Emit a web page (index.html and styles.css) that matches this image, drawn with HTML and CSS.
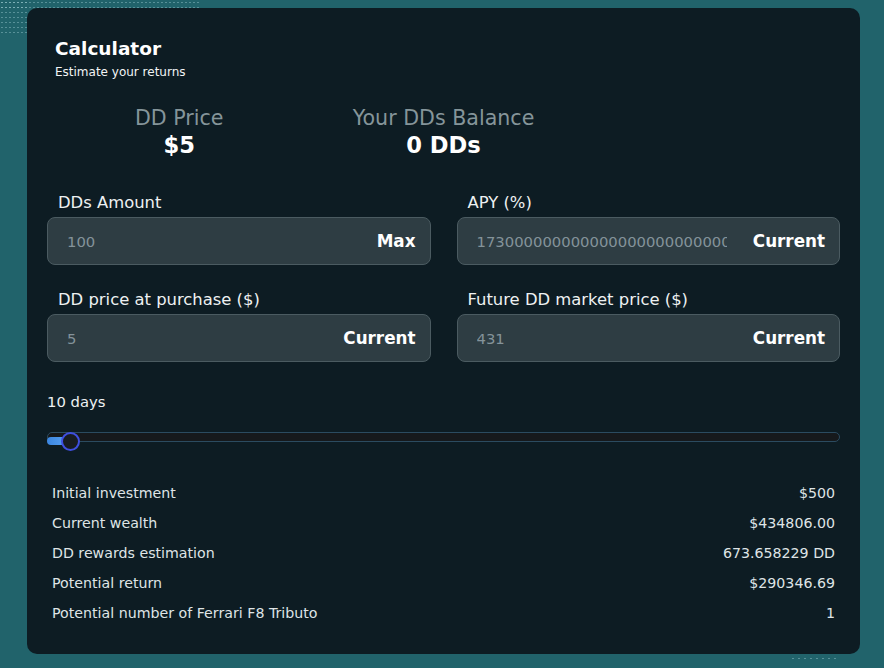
FILE: index.html
```html
<!DOCTYPE html>
<html lang="en">
<head>
    <meta charset="UTF-8">
    <meta name="viewport" content="width=device-width, initial-scale=1.0">
    <title>Calculator</title>
    <link rel="stylesheet" href="styles.css">
</head>
<body>
    <div class="dots dots-top"></div>
    <div class="dots dots-left"></div>
    <div class="dots dots-right"></div>
    <div class="card">
        <h1 class="title">Calculator</h1>
        <p class="subtitle">Estimate your returns</p>

        <div class="stats">
            <div class="stat">
                <span class="stat-label">DD Price</span>
                <strong class="stat-value">$5</strong>
            </div>
            <div class="stat">
                <span class="stat-label">Your DDs Balance</span>
                <strong class="stat-value">0 DDs</strong>
            </div>
        </div>

        <div class="fields">
            <div class="field">
                <label>DDs Amount</label>
                <div class="input-wrap">
                    <input type="text" value="100">
                    <span class="input-btn">Max</span>
                </div>
            </div>
            <div class="field">
                <label>APY (%)</label>
                <div class="input-wrap">
                    <input type="text" value="17300000000000000000000000000">
                    <span class="input-btn">Current</span>
                </div>
            </div>
            <div class="field">
                <label>DD price at purchase ($)</label>
                <div class="input-wrap">
                    <input type="text" value="5">
                    <span class="input-btn">Current</span>
                </div>
            </div>
            <div class="field">
                <label>Future DD market price ($)</label>
                <div class="input-wrap">
                    <input type="text" value="431">
                    <span class="input-btn">Current</span>
                </div>
            </div>
        </div>

        <div class="days">10 days</div>
        <div class="slider">
            <div class="track"></div>
            <div class="fill"></div>
            <div class="thumb"></div>
        </div>

        <div class="results">
            <div class="row"><span>Initial investment</span><span>$500</span></div>
            <div class="row"><span>Current wealth</span><span>$434806.00</span></div>
            <div class="row"><span>DD rewards estimation</span><span>673.658229 DD</span></div>
            <div class="row"><span>Potential return</span><span>$290346.69</span></div>
            <div class="row"><span>Potential number of Ferrari F8 Tributo</span><span>1</span></div>
        </div>
    </div>
</body>
</html>
```
FILE: styles.css
```css
body {
    margin: 0;
    height: 668px;
    overflow: hidden;
    background-color: #21636b;
    font-family: "DejaVu Sans", "Noto Sans", sans-serif;
    color: #e6ebed;
    position: relative;
}
.dots {
    position: absolute;
    background-image: radial-gradient(circle, rgba(190, 230, 235, 0.35) 0.7px, transparent 1px);
    background-size: 4px 5px;
}
.dots-top {
    left: 0;
    top: 0;
    width: 200px;
    height: 12px;
}
.dots-left {
    left: 0;
    top: 0;
    width: 27px;
    height: 34px;
}
.dots-right {
    left: 790px;
    top: 585px;
    width: 50px;
    height: 74px;
    background-size: 6px 7px;
}
.card {
    position: relative;
    box-sizing: border-box;
    width: 833px;
    height: 646px;
    margin: 8px 0 0 27px;
    padding: 29px 20px 26px;
    background-color: #0d1c23;
    border-radius: 10px;
}
.title {
    margin: 0 0 0 8px;
    font-size: 18.5px;
    line-height: 24px;
    font-weight: bold;
    color: #fff;
}
.subtitle {
    margin: 3px 0 0 8px;
    font-size: 12px;
    line-height: 16px;
    color: #f2f4f5;
}
.stats {
    display: grid;
    grid-template-columns: repeat(3, 1fr);
    margin-top: 26px;
}
.stat {
    display: flex;
    flex-direction: column;
    align-items: center;
}
.stat-label {
    font-size: 20.6px;
    line-height: 24px;
    color: #85959a;
}
.stat-value {
    font-size: 22.6px;
    line-height: 30px;
    color: #fff;
}
.fields {
    display: grid;
    grid-template-columns: 1fr 1fr;
    column-gap: 26px;
    row-gap: 24px;
    margin-top: 32px;
}
.field label {
    display: block;
    padding: 1px 0 0 11px;
    margin-bottom: 4px;
    font-size: 16.4px;
    line-height: 20px;
    color: #eef1f2;
}
.input-wrap {
    display: flex;
    align-items: center;
    box-sizing: border-box;
    height: 48px;
    padding: 0 14px 0 19px;
    background-color: #2e3d43;
    border: 1.5px solid #4b5b61;
    border-radius: 8px;
}
.input-wrap input {
    flex: 1;
    min-width: 0;
    padding: 0;
    border: none;
    outline: none;
    background: transparent;
    font-family: inherit;
    font-size: 14.8px;
    color: #84939a;
}
.input-btn {
    margin-left: 26px;
    font-size: 16.8px;
    font-weight: bold;
    color: #fff;
}
.days {
    margin-top: 30px;
    font-size: 14.8px;
    line-height: 20px;
    color: #eef1f2;
}
.slider {
    position: relative;
    height: 18px;
    margin-top: 20px;
}
.track {
    box-sizing: border-box;
    height: 10px;
    margin-top: 4px;
    background-color: #16191c;
    border: 1px solid #2b4b60;
    border-radius: 5px;
}
.fill {
    position: absolute;
    left: 0;
    top: 5px;
    width: 24px;
    height: 8px;
    border-radius: 4px 0 0 4px;
    background: linear-gradient(90deg, #3b86e0, #5ca6f5);
}
.thumb {
    position: absolute;
    left: 14px;
    top: 0;
    box-sizing: border-box;
    width: 19px;
    height: 19px;
    background-color: #181c22;
    border: 2px solid #3f4fe0;
    border-radius: 50%;
}
.results {
    margin-top: 28px;
    padding: 0 5px;
}
.row {
    display: flex;
    justify-content: space-between;
    font-size: 14.2px;
    line-height: 30px;
    color: #dfe4e6;
}
```
